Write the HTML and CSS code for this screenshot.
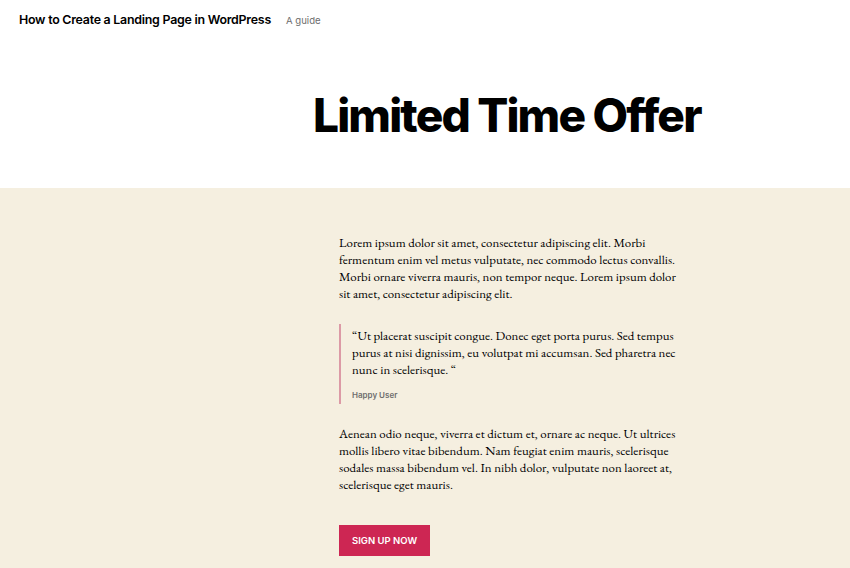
FILE: index.html
```html
<!DOCTYPE html>
<html>
<head>
<meta charset="utf-8">
<link rel="stylesheet" href="styles.css">
</head>
<body>
<header class="site-header">
  <div class="site-title">How to Create a Landing Page in WordPress</div>
  <div class="site-desc">A guide</div>
</header>
<section class="hero">
  <h1 class="hero-title">Limited Time Offer</h1>
</section>
<main class="band">
  <div class="content">
    <p class="para">Lorem ipsum dolor sit amet, consectetur adipiscing elit. Morbi fermentum enim vel metus vulputate, nec commodo lectus convallis. Morbi ornare viverra mauris, non tempor neque. Lorem ipsum dolor sit amet, consectetur adipiscing elit.</p>
    <blockquote class="quote">
      <p class="quote-text">“Ut placerat suscipit congue. Donec eget porta purus. Sed tempus purus at nisi dignissim, eu volutpat mi accumsan. Sed pharetra nec nunc in scelerisque. “</p>
      <cite class="quote-cite">Happy User</cite>
    </blockquote>
    <p class="para">Aenean odio neque, viverra et dictum et, ornare ac neque. Ut ultrices mollis libero vitae bibendum. Nam feugiat enim mauris, scelerisque sodales massa bibendum vel. In nibh dolor, vulputate non laoreet at, scelerisque eget mauris.</p>
    <a class="button">Sign up now</a>
  </div>
</main>
</body>
</html>
```
FILE: styles.css
```css
html, body {
  margin: 0;
  padding: 0;
  background: #fff;
  color: #000;
}
body {
  width: 850px;
  height: 568px;
  overflow: hidden;
}
.site-header {
  display: flex;
  align-items: baseline;
  gap: 15px;
  padding: 12px 19px 0;
  height: 30px;
  font-family: Inter, "Liberation Sans", sans-serif;
}
.site-title {
  font-size: 12.4px;
  font-weight: 600;
  letter-spacing: -0.02em;
  color: #000;
}
.site-desc {
  font-size: 9.6px;
  color: #6d6d6d;
}
.hero {
  height: 146px;
  padding-left: 313px;
}
.hero-title {
  margin: 0;
  padding-top: 46px;
  font-family: Inter, "Liberation Sans", sans-serif;
  font-size: 46px;
  font-weight: 800;
  letter-spacing: -0.04em;
  line-height: 1.2;
  color: #000;
}
.band {
  box-sizing: border-box;
  background: #f5efe0;
  height: 380px;
  padding-top: 46px;
}
.content {
  margin-left: 339px;
  width: 342px;
  font-family: "EB Garamond", "Liberation Serif", serif;
  color: #000;
}
.para {
  margin: 0 0 22px;
  font-size: 12.9px;
  line-height: 17px;
}
.quote {
  margin: 0 0 21px;
  padding: 1px 0 1px 11px;
  border-left: 2px solid #dc9aa6;
}
.quote-text {
  margin: 2px 0 12px;
  font-size: 12.9px;
  line-height: 17px;
}
.quote-cite {
  display: block;
  font-style: normal;
  font-family: Inter, "Liberation Sans", sans-serif;
  font-size: 8px;
  font-weight: 600;
  color: #6d6d6d;
  margin-bottom: 3px;
}
.button {
  display: inline-block;
  margin-top: 10px;
  background: #cd2653;
  color: #fff;
  font-family: Inter, "Liberation Sans", sans-serif;
  font-size: 9.5px;
  font-weight: 600;
  text-transform: uppercase;
  letter-spacing: 0;
  padding: 0 13px;
  height: 31px;
  line-height: 31px;
}
```
